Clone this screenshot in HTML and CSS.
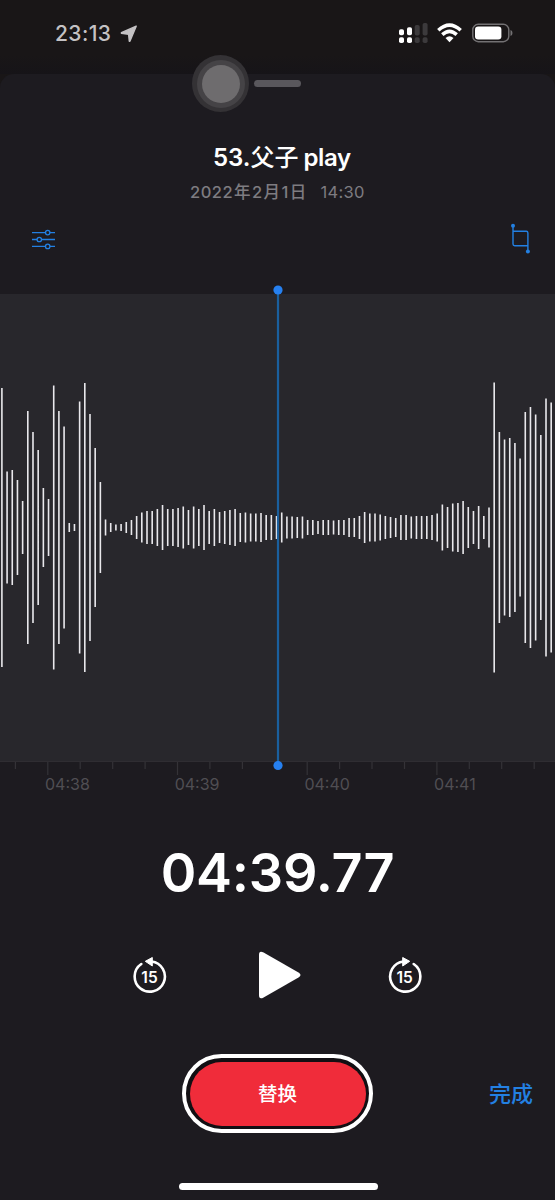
FILE: index.html
```
<!DOCTYPE html>
<html lang="zh-CN">
<head>
<meta charset="utf-8">
<title>53.父子play</title>
<link rel="stylesheet" href="styles.css">
</head>
<body>
<div class="phone">
  <header class="status">
    <span class="clock">23:13</span>
    <svg class="location" width="18" height="18" viewBox="0 0 18 18"><path d="M16.200 1.200 1.400 7.700V8.300L8.600 9.200 9.300 16.300H9.900Z"/></svg>
    <svg class="signals" width="120" height="22" viewBox="0 0 120 22">
      <g fill="#fff">
        <rect x="0" y="7.2" width="5" height="6" rx="1.8"/><rect x="8" y="5.2" width="5" height="8" rx="1.8"/>
        <rect x="0" y="15.2" width="5" height="5.8" rx="1.8"/><rect x="8" y="15.2" width="5" height="5.8" rx="1.8"/>
      </g>
      <g fill="#3c3a3c">
        <rect x="15.700" y="3" width="5" height="10.500" rx="1.800"/><rect x="23.600" y="1" width="5" height="12.500" rx="1.800"/>
        <rect x="15.700" y="15.200" width="5" height="5.800" rx="1.800"/><rect x="23.600" y="15.200" width="5" height="5.800" rx="1.800"/>
      </g>
      <g fill="none" stroke="#fff" stroke-width="3.500">
        <path d="M39.300 8.300Q50.500-1.900 61.700 8.300"/><path d="M43.300 12.600Q50.500 6 57.700 12.600"/>
      </g>
      <path fill="#fff" d="M46.500 16Q50.500 12.400 54.500 16L50.500 20.200Z"/>
      <rect x="73.800" y="2.300" width="36" height="17.400" rx="5.500" fill="none" stroke="#737173" stroke-width="1.400"/>
      <rect x="76" y="4.600" width="26.400" height="12.900" rx="3.200" fill="#fff"/>
      <path fill="#737173" d="M111.500 8Q113.500 8.700 113.500 11T111.500 14Z"/>
    </svg>
  </header>

  <main class="sheet">
    <div class="grabber"></div>
    <div class="touch"><div class="touch-mid"><div class="touch-core"></div></div></div>

    <h1 class="title"><span>53.</span><span class="han">父子</span><span class="word">play</span></h1>
    <p class="date"><span class="day">2022<b>年</b>2<b>月</b>1<b>日</b></span><span class="time">14:30</span></p>

    <div class="tools">
      <svg width="24" height="24" viewBox="0 0 24 24" fill="none" stroke="#2380e2" stroke-width="1.300">
        <path d="M0 5.600H13.500M18 5.600H23M0 12.500H5M9.500 12.500H23M0 19.400H13.500M18 19.400H23"/>
        <circle cx="15.700" cy="5.600" r="2.200"/><circle cx="7.300" cy="12.500" r="2.200"/><circle cx="15.700" cy="19.400" r="2.200"/>
      </svg>
      <svg width="20" height="32" viewBox="0 0 20 32" fill="none" stroke="#2380e2" stroke-width="1.400">
        <path d="M2 2.500V21Q2 22.700 3.700 22.700H16.900M2 8.300H15.200Q16.900 8.300 16.900 10V28"/>
        <g fill="#2380e2" stroke="none"><circle cx="2" cy="2.700" r="2"/><circle cx="16.900" cy="28.500" r="2"/></g>
      </svg>
    </div>

    <section class="wave">
      <svg width="555" height="467" viewBox="0 0 555 467"><path id="bars" fill="none" stroke="#e9e8ec" stroke-width="1.600"/></svg>
      <svg class="playhead" width="10" height="486" viewBox="0 0 10 486"><path d="M5 5V481" stroke="#1a5f9e" stroke-width="2.200"/><g fill="#2680f0"><circle cx="5" cy="5" r="4.600"/><circle cx="5" cy="480.500" r="4.600"/></g></svg>
    </section>

    <div class="ruler">
      <svg width="555" height="13" viewBox="0 0 555 13" stroke="#343237" stroke-width="1.200"><path d="M47.800 0V13M177.500 0V13M307.200 0V13M436.900 0V13M15.400 0V7M80.200 0V7M112.700 0V7M145.100 0V7M209.900 0V7M242.400 0V7M339.600 0V7M372 0V7M404.500 0V7M469.300 0V7M501.700 0V7M534.200 0V7"/></svg>
      <div class="labels"><span>04:38</span><span>04:39</span><span>04:40</span><span>04:41</span></div>
    </div>

    <div class="counter">04:39.77</div>

    <div class="transport">
      <svg width="36" height="40" viewBox="0 0 36 40">
        <path d="M9.300 9A15.100 15.100 0 1 0 19.500 6.500" fill="none" stroke="#fff" stroke-width="2.600" stroke-linecap="round"/>
        <path d="M13.300 6.300 20.300 2.500V11Z" fill="#fff" stroke="#fff" stroke-linejoin="round"/>
        <text class="skip" x="17.500" y="27.800">15</text>
      </svg>
      <svg width="44" height="50" viewBox="0 0 44 50"><path fill="#fff" d="M1 5Q1 0 5.600 2.600L40.500 22.500Q44.500 25 40.500 27.500L5.600 47.400Q1 50 1 45Z"/></svg>
      <svg width="36" height="40" viewBox="0 0 36 40">
        <path d="M26.700 9A15.100 15.100 0 1 1 16.500 6.500" fill="none" stroke="#fff" stroke-width="2.600" stroke-linecap="round"/>
        <path d="M22.700 6.300 15.700 2.500V11Z" fill="#fff" stroke="#fff" stroke-linejoin="round"/>
        <text class="skip" x="17.700" y="27.800">15</text>
      </svg>
    </div>

    <div class="actions">
      <button class="replace"><span>替换</span></button>
      <a class="done">完成</a>
    </div>
    <div class="home"></div>
  </main>
</div>
<script src="script.js"></script>
</body>
</html>
```
FILE: styles.css
```
* { box-sizing: border-box; margin: 0; padding: 0; }
body { width: 555px; height: 1200px; background: #191617; font-family: Inter, "Noto Sans CJK SC", sans-serif; color: #fff; overflow: hidden; }
svg { display: block; flex: none; }
.phone { width: 555px; height: 1200px; display: flex; flex-direction: column; }
.status { height: 74px; flex: none; display: flex; align-items: flex-start; padding: 22px 36px 0 55px; background: linear-gradient(#191617 75%, #161418); }
.clock { font-size: 21px; line-height: 24px; font-weight: 500; color: #c4c2c4; width: 57px; letter-spacing: .4px; }
.location { margin: 3px 0 0 8px; fill: #c4c2c4; stroke: #c4c2c4; stroke-width: 1.4px; stroke-linejoin: round; }
.signals { margin-left: auto; }
.sheet { position: relative; height: 1126px; background: #1d1b20; border-radius: 14px 14px 0 0; display: flex; flex-direction: column; }
.grabber { width: 47px; height: 7px; margin: 6px 0 0 254px; border-radius: 4px; background: #59575c; flex: none; }
.touch { position: absolute; left: 192px; top: -19px; width: 57px; height: 57px; border-radius: 50%; background: #343235; display: flex; align-items: center; justify-content: center; }
.touch-mid { width: 48px; height: 48px; border-radius: 50%; background: #454346; display: flex; align-items: center; justify-content: center; }
.touch-core { width: 38px; height: 38px; border-radius: 50%; background: #6e6c6e; }
.title { display: flex; align-items: baseline; margin: 52px 0 0 213px; height: 34px; line-height: 34px; font-size: 24px; font-weight: 600; white-space: nowrap; }
.han { font-weight: 500; font-family: "Noto Sans CJK SC", sans-serif; }
.word { margin-left: 5px; letter-spacing: -.4px; }
.date { display: flex; align-items: baseline; height: 24px; line-height: 24px; margin: 7px 0 0 190px; font-size: 16.5px; color: #7e7c81; white-space: nowrap; }
.day { font-weight: 500; letter-spacing: .5px; width: 118px; }
.day b { font-weight: 500; margin: 0 .9px; }
.time { margin-left: 12.5px; letter-spacing: .3px; }
.tools { display: flex; justify-content: space-between; align-items: center; height: 32px; margin: 19px 24px 0 32px; }
.wave { position: relative; height: 467px; margin-top: 39px; background: #28272c; flex: none; }
.playhead { position: absolute; left: 273px; top: -9px; }
.ruler { height: 48px; border-top: 1px solid #2f2d32; flex: none; }
.labels { display: flex; padding-left: 45px; font-size: 16px; line-height: 18px; color: #504e53; }
.labels span { width: 129.7px; flex: none; }
.counter { height: 72px; line-height: 72px; margin-top: 28px; text-align: center; font-size: 54px; font-weight: 600; letter-spacing: -.25px; }
.transport { display: flex; justify-content: space-between; align-items: center; height: 50px; margin: 41px 131px 0 132px; }
.transport svg:nth-child(2) { position: relative; left: 2px; }
.transport svg:nth-child(3) { position: relative; left: -1px; }
.skip { font: 600 15.5px Inter, sans-serif; text-anchor: middle; fill: #fff; }
.actions { display: flex; align-items: center; margin: 54px 0 0 182px; }
.replace { width: 191px; height: 79px; border: 4.5px solid #fff; border-radius: 40px; background: #120f13; padding: 3.5px; font: 500 19.5px "Noto Sans CJK SC", sans-serif; color: #fff; display: flex; flex: none; }
.replace span { flex: 1; height: 100%; border-radius: 34px; background: #f02c3a; display: flex; align-items: center; justify-content: center; padding-bottom: 2px; }
.done { margin-left: 116px; padding-bottom: 3px; font: 500 22px "Noto Sans CJK SC", sans-serif; color: #2380e2; }
.home { width: 199px; height: 7px; border-radius: 4px; background: #fff; margin: 50px 0 0 179px; }
```
FILE: script.js
```
const levels = [
  279,112,115,95,53,233,191,155,79,57,284,233,202,9,7,252,289,227,159,91,
  16,9,6,7,11,15,23,30,33,33,37,45,37,37,39,42,35,42,37,45,
  33,37,31,33,35,37,29,30,28,28,29,25,25,23,30,22,22,21,22,15,
  15,13,15,15,14,15,15,19,19,23,31,28,28,26,23,21,19,25,25,22,
  23,23,23,25,28,46,41,48,49,53,41,33,43,23,40,290,191,176,179,169,
  138,231,241,226,185,258,250
];
const STEP = 5.182;
const MIDDLE = 233.5;
document.getElementById("bars").setAttribute("d", levels.map((level, i) =>
  `M${(1.9 + i * STEP).toFixed(2)} ${MIDDLE - level / 2}v${level}`
).join(""));
```
